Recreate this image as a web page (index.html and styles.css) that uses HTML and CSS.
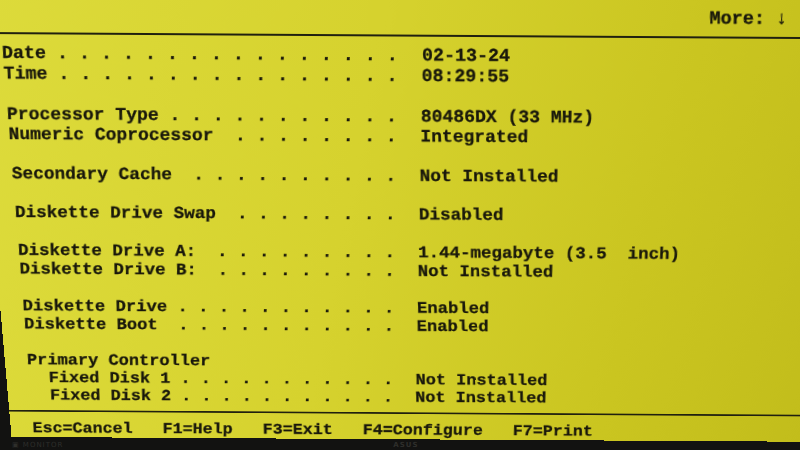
FILE: index.html
```html
<!DOCTYPE html>
<html lang="en">
<head>
<meta charset="utf-8">
<title>System Configuration</title>
<link rel="stylesheet" href="styles.css">
</head>
<body>
<main class="screen">
  <header class="topbar"><span class="more">More: ↓</span></header>
  <div class="rule"></div>
  <section class="fields">
    <div class="group">
      <div class="row"><span class="label">Date . . . . . . . . . . . . . . . .</span><span class="value">02-13-24</span></div>
      <div class="row"><span class="label">Time . . . . . . . . . . . . . . . .</span><span class="value">08:29:55</span></div>
    </div>
    <div class="group">
      <div class="row"><span class="label">Processor Type . . . . . . . . . . .</span><span class="value">80486DX (33 MHz)</span></div>
      <div class="row"><span class="label">Numeric Coprocessor  . . . . . . . .</span><span class="value">Integrated</span></div>
    </div>
    <div class="group">
      <div class="row"><span class="label">Secondary Cache  . . . . . . . . . .</span><span class="value">Not Installed</span></div>
    </div>
    <div class="group">
      <div class="row"><span class="label">Diskette Drive Swap  . . . . . . . .</span><span class="value">Disabled</span></div>
    </div>
    <div class="group">
      <div class="row"><span class="label">Diskette Drive A:  . . . . . . . . .</span><span class="value">1.44-megabyte (3.5  inch)</span></div>
      <div class="row"><span class="label">Diskette Drive B:  . . . . . . . . .</span><span class="value">Not Installed</span></div>
    </div>
    <div class="group">
      <div class="row"><span class="label">Diskette Drive . . . . . . . . . . .</span><span class="value">Enabled</span></div>
      <div class="row"><span class="label">Diskette Boot  . . . . . . . . . . .</span><span class="value">Enabled</span></div>
    </div>
    <div class="group">
      <div class="row"><span class="label">Primary Controller</span></div>
      <div class="row"><span class="label indent">Fixed Disk 1 . . . . . . . . . . .</span><span class="value">Not Installed</span></div>
      <div class="row"><span class="label indent">Fixed Disk 2 . . . . . . . . . . .</span><span class="value">Not Installed</span></div>
    </div>
  </section>
  <div class="rule rule-bottom"></div>
  <footer class="keys">
    <span class="key key-left">Esc=Cancel</span>
    <span class="key key-left">F1=Help</span>
    <span class="key">F3=Exit</span>
    <span class="key">F4=Configure</span>
    <span class="key key-right">F7=Print</span>
  </footer>
</main>
<div class="bezel">
  <span class="brand-left">▣ MONITOR</span>
  <span class="brand-mid">ASUS</span>
</div>
</body>
</html>
```

FILE: styles.css
```css
html, body {
  margin: 0;
  padding: 0;
}

body {
  width: 800px;
  height: 450px;
  overflow: hidden;
  background: #121211;
}

.screen {
  display: block;
  box-sizing: border-box;
  width: 930px;
  height: 504px;
  margin: -20px 0 -44px -22px;
  padding: 26.1px 0 0 24px;
  background: linear-gradient(100deg, #dddb3b 0%, #d6d22e 40%, #cac520 72%, #c0bb1a 100%);
  color: #18170b;
  font-family: "Liberation Mono", "DejaVu Sans Mono", monospace;
  font-weight: bold;
  font-size: 18.33px;
  line-height: 21px;
  -webkit-text-stroke: 0.3px #18170b;
  transform-origin: 362px 75px;
  transform: skewY(0.35deg) perspective(696px) rotateX(-9.53deg);
}

.topbar {
  height: 21px;
  display: flex;
  white-space: pre;
}

.more {
  margin-left: 64ch;
  transform: skewX(5deg);
}

.rule {
  height: 2px;
  margin: 6.9px 0 0 -24px;
  background: #20200f;
}

.rule-bottom {
  margin-top: 6.2px;
}

.fields {
  margin-top: 9.5px;
}

.group + .group {
  margin-top: 21px;
}

.row {
  display: flex;
  height: 21px;
  white-space: pre;
}

.label {
  flex: none;
  box-sizing: border-box;
  width: 38ch;
  transform: skewX(-2.5deg);
}

.indent {
  padding-left: 2ch;
}

.value {
  flex: none;
  margin-left: 2px;
  transform: skewX(2.5deg);
}

.keys {
  display: flex;
  gap: 3ch;
  height: 21px;
  margin-top: 10.5px;
  white-space: pre;
}

.key-left {
  transform: skewX(-2.5deg);
}

.key-right {
  transform: skewX(3deg);
}

.bezel {
  display: flex;
  align-items: flex-start;
  height: 10px;
  padding: 2px 0 0 12px;
  font-family: "DejaVu Sans", sans-serif;
  font-size: 7px;
  line-height: 7px;
  color: #2e2e2b;
  letter-spacing: 1px;
}

.brand-mid {
  margin-left: 330px;
  font-weight: bold;
}
```
